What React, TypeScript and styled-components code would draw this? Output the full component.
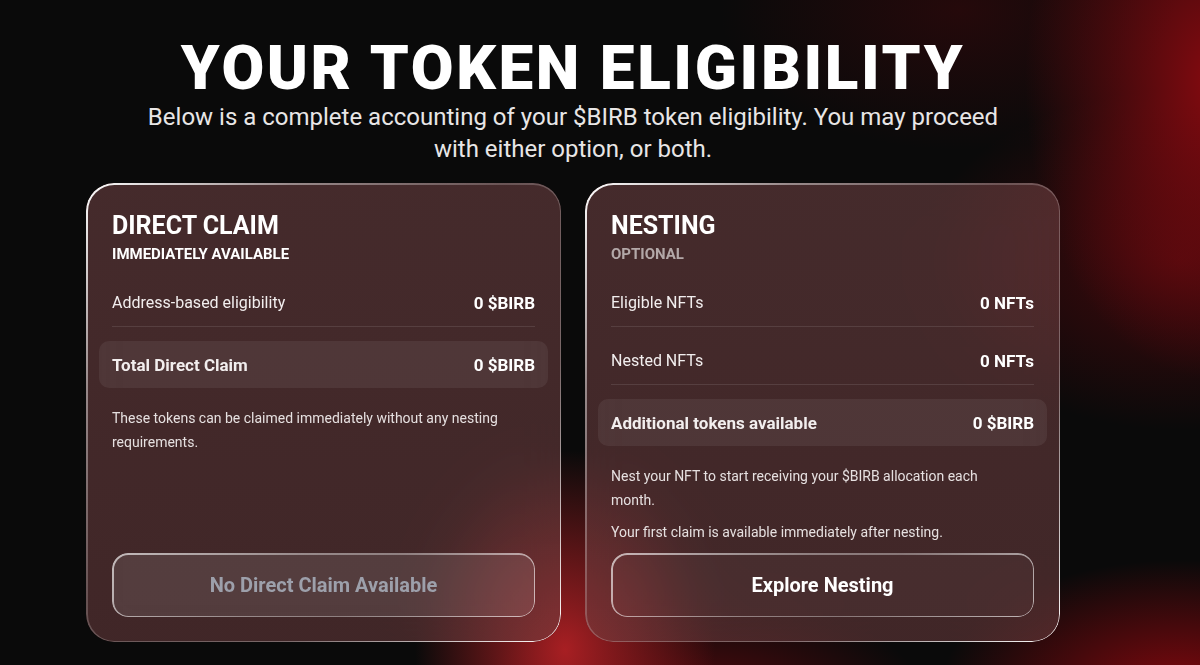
import React from "react";
import styled, { createGlobalStyle } from "styled-components";

const GlobalStyle = createGlobalStyle`
  html, body {
    margin: 0;
    padding: 0;
    height: 100%;
  }
  body {
    background-color: #0a0a0a;
    background-image:
      radial-gradient(ellipse 190px 300px at 1215px 80px, rgba(140, 10, 16, 0.95), rgba(140, 10, 16, 0) 100%),
      radial-gradient(ellipse 260px 170px at 1180px 260px, rgba(110, 8, 14, 0.55), rgba(110, 8, 14, 0) 100%),
      radial-gradient(ellipse 240px 130px at 1180px 690px, rgba(135, 8, 14, 0.95), rgba(135, 8, 14, 0) 100%),
      radial-gradient(ellipse 150px 200px at 565px 650px, rgba(175, 32, 36, 0.95), rgba(175, 32, 36, 0) 100%),
      radial-gradient(ellipse 220px 90px at 700px 690px, rgba(120, 10, 16, 0.6), rgba(120, 10, 16, 0) 100%),
      radial-gradient(ellipse 240px 140px at 960px 10px, rgba(70, 8, 12, 0.45), rgba(70, 8, 12, 0) 100%);
    background-repeat: no-repeat;
    font-family: Roboto, "Liberation Sans", sans-serif;
    color: #ffffff;
    overflow: hidden;
  }
`;

const Page = styled.main`
  width: 1200px;
  height: 665px;
  box-sizing: border-box;
  padding: 37px 54px 0 0;
  display: flex;
  flex-direction: column;
  align-items: center;
`;

const Title = styled.h1`
  margin: 0;
  font-family: Roboto, "Liberation Sans", sans-serif;
  font-weight: 900;
  font-size: 62px;
  line-height: 61px;
  letter-spacing: 2.6px;
  color: #ffffff;
  text-align: center;
`;

const Lead = styled.p`
  margin: 3px 0 0;
  width: 860px;
  font-size: 24px;
  line-height: 32px;
  font-weight: 400;
  color: #e8e6e6;
  text-align: center;
`;

const Cards = styled.div`
  margin-top: 18px;
  display: grid;
  grid-template-columns: 475px 475px;
  gap: 24px;
`;

const Card = styled.section`
  position: relative;
  box-sizing: border-box;
  height: 459px;
  padding: 28px 26px 25px;
  border-radius: 28px;
  background: linear-gradient(180deg, rgba(118, 70, 72, 0.55) 0%, rgba(116, 66, 68, 0.52) 100%);
  backdrop-filter: blur(24px);
  display: flex;
  flex-direction: column;

  &::before {
    content: "";
    position: absolute;
    inset: 0;
    border-radius: 28px;
    padding: 1.5px;
    background: linear-gradient(
      135deg,
      rgba(255, 255, 255, 1) 0%,
      rgba(255, 255, 255, 0.45) 22%,
      rgba(255, 255, 255, 0.2) 45%,
      rgba(255, 255, 255, 0.3) 70%,
      rgba(255, 255, 255, 1) 100%
    );
    -webkit-mask: linear-gradient(#000 0 0) content-box, linear-gradient(#000 0 0);
    -webkit-mask-composite: xor;
    mask-composite: exclude;
    pointer-events: none;
  }
`;

const CardTitle = styled.h2`
  margin: 0;
  font-size: 25px;
  line-height: 30px;
  font-weight: 700;
  color: #ffffff;
`;

const CardTag = styled.div<{ $muted?: boolean }>`
  margin-top: 3px;
  font-size: 15px;
  line-height: 20px;
  font-weight: 700;
  color: ${(p) => (p.$muted ? "#b3a8a8" : "#ffffff")};
`;

const Rows = styled.div`
  margin-top: 16px;
  display: flex;
  flex-direction: column;
  gap: 11px;
`;

const Row = styled.div<{ $total?: boolean }>`
  display: flex;
  justify-content: space-between;
  align-items: center;
  font-size: 16px;
  line-height: 22px;
  padding: ${(p) => (p.$total ? "12.5px 13px" : "12px 0")};
  margin: ${(p) => (p.$total ? "3px -13px 0" : "0")};
  border-bottom: ${(p) => (p.$total ? "none" : "1px solid rgba(255, 255, 255, 0.1)")};
  border-radius: ${(p) => (p.$total ? "10px" : "0")};
  background: ${(p) => (p.$total ? "rgba(255, 255, 255, 0.065)" : "transparent")};
`;

const Label = styled.span<{ $strong?: boolean }>`
  font-weight: ${(p) => (p.$strong ? 700 : 400)};
  font-size: ${(p) => (p.$strong ? "17px" : "16px")};
  color: #f2eeee;
`;

const Value = styled.span`
  font-weight: 700;
  font-size: 17px;
  color: #ffffff;
`;

const Notes = styled.div`
  margin-top: 18px;
  display: flex;
  flex-direction: column;
  gap: 8px;
  width: 410px;
`;

const Note = styled.p`
  margin: 0;
  font-size: 14px;
  line-height: 24px;
  color: #e6e0e0;
`;

const Button = styled.button<{ $disabled?: boolean }>`
  position: relative;
  margin-top: auto;
  height: 64px;
  width: 100%;
  border: none;
  border-radius: 16px;
  font-family: Roboto, "Liberation Sans", sans-serif;
  font-size: 20px;
  font-weight: 700;
  cursor: ${(p) => (p.$disabled ? "default" : "pointer")};
  color: ${(p) => (p.$disabled ? "#9da0ab" : "#ffffff")};
  background: ${(p) => (p.$disabled ? "rgba(255, 255, 255, 0.1)" : "rgba(255, 255, 255, 0.03)")};

  &::before {
    content: "";
    position: absolute;
    inset: 0;
    border-radius: 16px;
    padding: 1.5px;
    background: linear-gradient(
      135deg,
      rgba(255, 255, 255, 0.65) 0%,
      rgba(255, 255, 255, 0.4) 40%,
      rgba(255, 255, 255, 0.35) 60%,
      rgba(255, 255, 255, 0.65) 100%
    );
    -webkit-mask: linear-gradient(#000 0 0) content-box, linear-gradient(#000 0 0);
    -webkit-mask-composite: xor;
    mask-composite: exclude;
    pointer-events: none;
  }
`;

export default function App() {
  return (
    <>
      <GlobalStyle />
      <Page>
        <Title>YOUR TOKEN ELIGIBILITY</Title>
        <Lead>
          Below is a complete accounting of your $BIRB token eligibility. You may proceed with either option, or both.
        </Lead>
        <Cards>
          <Card>
            <CardTitle>DIRECT CLAIM</CardTitle>
            <CardTag>IMMEDIATELY AVAILABLE</CardTag>
            <Rows>
              <Row>
                <Label>Address-based eligibility</Label>
                <Value>0 $BIRB</Value>
              </Row>
              <Row $total>
                <Label $strong>Total Direct Claim</Label>
                <Value>0 $BIRB</Value>
              </Row>
            </Rows>
            <Notes>
              <Note>These tokens can be claimed immediately without any nesting requirements.</Note>
            </Notes>
            <Button $disabled disabled>
              No Direct Claim Available
            </Button>
          </Card>
          <Card>
            <CardTitle>NESTING</CardTitle>
            <CardTag $muted>OPTIONAL</CardTag>
            <Rows>
              <Row>
                <Label>Eligible NFTs</Label>
                <Value>0 NFTs</Value>
              </Row>
              <Row>
                <Label>Nested NFTs</Label>
                <Value>0 NFTs</Value>
              </Row>
              <Row $total>
                <Label $strong>Additional tokens available</Label>
                <Value>0 $BIRB</Value>
              </Row>
            </Rows>
            <Notes>
              <Note>Nest your NFT to start receiving your $BIRB allocation each month.</Note>
              <Note>Your first claim is available immediately after nesting.</Note>
            </Notes>
            <Button>Explore Nesting</Button>
          </Card>
        </Cards>
      </Page>
    </>
  );
}
